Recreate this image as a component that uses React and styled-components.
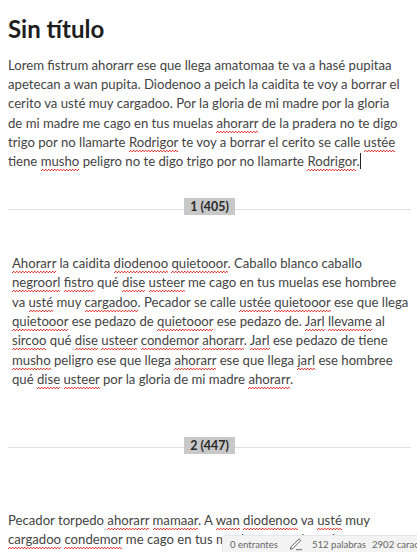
import styled, { createGlobalStyle } from 'styled-components';

const Global = createGlobalStyle`
	html, body {
		margin: 0;
		height: 100%;
		overflow: hidden;
		background: #ffffff;
	}
`;

const Pagina = styled.div`
	position: relative;
	width: 417px;
	height: 552px;
	overflow: hidden;
	padding: 13px 6px 0 8px;
	box-sizing: border-box;
	font-family: "Lato", "Open Sans", sans-serif;
	color: #444444;
`;

const Titulo = styled.h1`
	margin: 0 0 10.5px;
	font-size: 24px;
	line-height: 32px;
	font-weight: 700;
	color: #1e1e1e;
`;

const Parrafo = styled.div`
	font-size: 13.15px;
	line-height: 19.4px;
	white-space: nowrap;
	margin-top: ${(props) => props.$arriba || '0'};
	padding-left: ${(props) => (props.$sangria ? '4px' : '0')};
`;

const Linea = styled.div`
	height: 19.4px;
`;

const Error = styled.span`
	padding-bottom: 2px;
	background-image:
		linear-gradient(135deg, transparent 40%, #e53935 40%, #e53935 60%, transparent 60%),
		linear-gradient(45deg, transparent 40%, #e53935 40%, #e53935 60%, transparent 60%);
	background-size: 3px 2px;
	background-position: 0 100%, 1.5px 100%;
	background-repeat: repeat-x;
`;

const Cursor = styled.span`
	display: inline-block;
	width: 1px;
	height: 16px;
	background: #222222;
	vertical-align: -3px;
`;

const Separador = styled.div`
	display: flex;
	justify-content: center;
	height: 17px;
	margin-top: ${(props) => props.$arriba};
	background: linear-gradient(#dfdfdf, #dfdfdf) 0 10.5px / 100% 1px no-repeat;
`;

const Etiqueta = styled.span`
	width: 51px;
	height: 17px;
	background: #c8c8c8;
	font-size: 12.4px;
	line-height: 17px;
	font-weight: 700;
	text-align: center;
	color: #2a2a2a;
`;

const BarraEstado = styled.div`
	position: absolute;
	right: 0;
	bottom: 0;
	width: 195px;
	height: 17px;
	display: flex;
	align-items: center;
	gap: 6px;
	padding-left: 7px;
	box-sizing: border-box;
	background: #f3f3f3;
	border-top: 1px solid #e6e6e6;
	border-left: 1px solid #e6e6e6;
	border-top-left-radius: 3px;
	font-size: 9.6px;
	color: #666666;
	white-space: nowrap;
	overflow: hidden;
`;

const IconoLapiz = styled.svg`
	width: 14px;
	height: 14px;
	margin: 0 3px 0 5px;
	flex: none;
`;

const E = ({ children }) => <Error>{children}</Error>;

const App = () => (
	<Pagina>
		<Global />
		<Titulo>Sin título</Titulo>
		<Parrafo>
			<Linea>Lorem fistrum ahorarr ese que llega amatomaa te va a hasé pupitaa</Linea>
			<Linea>apetecan a wan pupita. Diodenoo a peich la caidita te voy a borrar el</Linea>
			<Linea>cerito va usté muy cargadoo. Por la gloria de mi madre por la gloria</Linea>
			<Linea>de mi madre me cago en tus muelas <E>ahorarr</E> de la pradera no te digo</Linea>
			<Linea>trigo por no llamarte <E>Rodrigor</E> te voy a borrar el cerito se calle <E>ustée</E></Linea>
			<Linea>tiene <E>musho</E> peligro no te digo trigo por no llamarte <E>Rodrigor</E>.<Cursor /></Linea>
		</Parrafo>
		<Separador $arriba="26.5px"><Etiqueta>1 (405)</Etiqueta></Separador>
		<Parrafo $sangria $arriba="38.5px">
			<Linea><E>Ahorarr</E> la caidita <E>diodenoo</E> <E>quietooor</E>. Caballo blanco caballo</Linea>
			<Linea><E>negroorl</E> <E>fistro</E> qué <E>dise</E> <E>usteer</E> me cago en tus muelas ese hombree</Linea>
			<Linea>va <E>usté</E> muy <E>cargadoo</E>. Pecador se calle <E>ustée</E> <E>quietooor</E> ese que llega</Linea>
			<Linea><E>quietooor</E> ese pedazo de <E>quietooor</E> ese pedazo de. <E>Jarl</E> <E>llevame</E> al</Linea>
			<Linea><E>sircoo</E> qué <E>dise</E> <E>usteer</E> <E>condemor</E> <E>ahorarr</E>. <E>Jarl</E> ese pedazo de tiene</Linea>
			<Linea><E>musho</E> peligro ese que llega <E>ahorarr</E> ese que llega <E>jarl</E> ese hombree</Linea>
			<Linea>qué <E>dise</E> <E>usteer</E> por la gloria de mi madre <E>ahorarr</E>.</Linea>
		</Parrafo>
		<Separador $arriba="47px"><Etiqueta>2 (447)</Etiqueta></Separador>
		<Parrafo $arriba="57px">
			<Linea>Pecador torpedo <E>ahorarr</E> <E>mamaar</E>. A <E>wan</E> <E>diodenoo</E> va <E>usté</E> muy</Linea>
			<Linea><E>cargadoo</E> <E>condemor</E> me cago en tus muelas ese pedazo de</Linea>
		</Parrafo>
		<BarraEstado>
			<span>0 entrantes</span>
			<IconoLapiz viewBox="0 0 16 16" fill="none" stroke="#555555" strokeWidth="1">
				<path d="M2.5 11 10.5 3a1.4 1.4 0 0 1 2 2l-8 8-3 1z" />
				<path d="M8 14.5h7" />
			</IconoLapiz>
			<span>512 palabras</span>
			<span>2902 caracteres</span>
		</BarraEstado>
	</Pagina>
);

export default App;
